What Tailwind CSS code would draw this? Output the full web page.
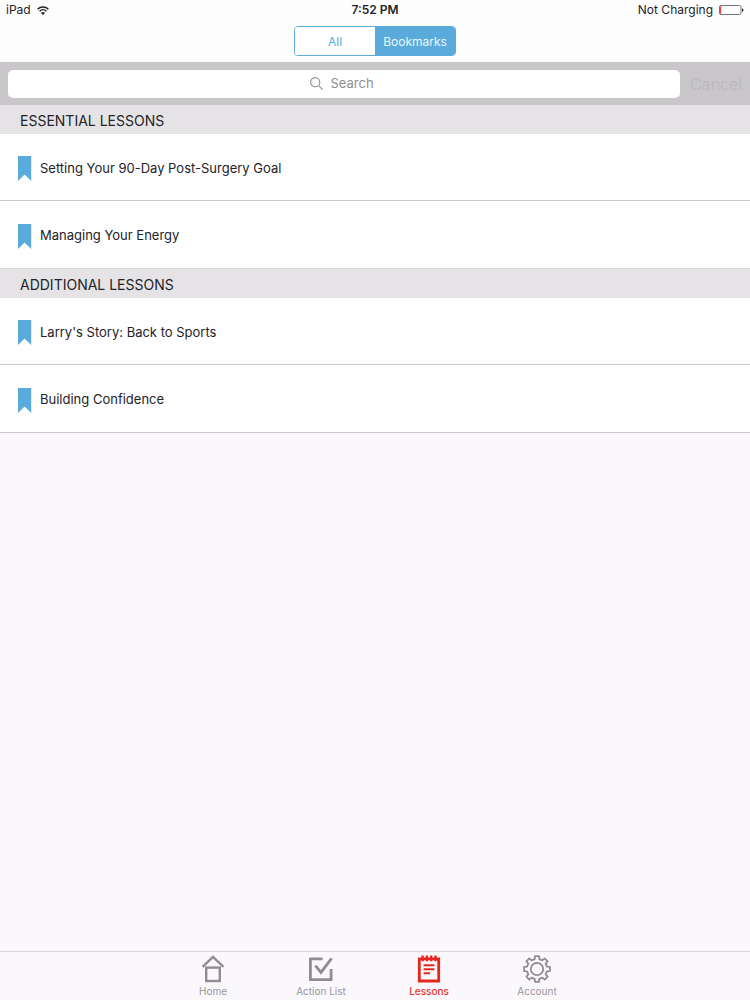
<!DOCTYPE html>
<html lang="en">
<head>
  <meta charset="UTF-8" />
  <meta name="viewport" content="width=device-width, initial-scale=1.0" />
  <title>Lessons</title>
  <script src="https://cdn.jsdelivr.net/npm/@tailwindcss/browser@4"></script>
</head>
<body class="min-h-screen flex flex-col bg-[#faf8fb] font-['Inter','Liberation_Sans',sans-serif] text-[#242328]">

  <header class="bg-[#fefdfe]">
    <!-- Status bar -->
    <div class="grid grid-cols-3 items-center h-5 px-1.5 text-xs">
      <div class="flex items-center gap-1.5">
        <span>iPad</span>
        <svg class="w-3 h-[9px]" viewBox="0 0 12 9" fill="none" stroke="#242328" stroke-width="1.5" aria-hidden="true">
          <path d="M0.6 3.2a7.7 7.7 0 0 1 10.8 0" />
          <path d="M2.6 5.2a4.9 4.9 0 0 1 6.8 0" />
          <path d="M6 9L4 6.9a2.9 2.9 0 0 1 4 0z" fill="#242328" stroke="none" />
        </svg>
      </div>
      <div class="text-center font-semibold">7:52 PM</div>
      <div class="flex items-center justify-end gap-1.5 whitespace-nowrap">
        <span>Not Charging</span>
        <svg class="w-[25px] h-[10px]" viewBox="0 0 25 10" aria-hidden="true">
          <rect x="0.5" y="0.5" width="21.5" height="9" rx="1.5" fill="#fff" stroke="#77757a" />
          <path d="M2.2 1H1.5Q1 1 1 2V8Q1 9 1.5 9H2.2z" fill="#e8474d" />
          <path d="M23 3.2q1.5 0.4 1.5 1.8t-1.5 1.8z" fill="#242328" />
        </svg>
      </div>
    </div>

    <!-- All / Bookmarks switch -->
    <div class="flex justify-center pt-1.5 pb-1.5">
      <div class="flex w-[162px] h-[30px] rounded border border-[#5aabdc] overflow-hidden text-xs">
        <button type="button" class="flex-1 pt-px bg-white text-[#5aabdc]">All</button>
        <button type="button" class="flex-1 pt-px bg-[#5aabdc] text-[#eaf6fd]">Bookmarks</button>
      </div>
    </div>
  </header>

  <form class="flex items-center h-[43px] pl-2 pr-2 bg-[#c8c6c9]">
    <div class="flex flex-1 items-center justify-center gap-2 h-7 rounded-[5px] bg-white">
      <svg class="w-[13px] h-[13px]" viewBox="0 0 13 13" fill="none" stroke="#8e8d92" stroke-width="1.1" aria-hidden="true">
        <circle cx="5.2" cy="5.2" r="4.6" />
        <path d="M8.6 8.6L12.6 12.6" />
      </svg>
      <input type="text" aria-label="Search" placeholder="Search" class="w-12 text-[13px] placeholder:text-[#8e8d92] outline-none" />
    </div>
    <button type="button" class="w-[62px] text-right text-base font-light text-[#b9b7bb]">Cancel</button>
  </form>

  <main class="flex-1">
    <section>
      <h2 class="flex items-center h-[29px] pt-0.5 px-5 bg-[#e5e3e6] text-sm">ESSENTIAL LESSONS</h2>
      <ul class="bg-[#fefefe] border-b border-[#dddbde] text-[13px]">
        <li class="h-[67px] border-b border-[#c9c8cb]">
          <a href="#" class="flex items-center gap-2 h-full pt-[3px] px-[18px]">
            <svg class="w-[14px] h-[25px]" viewBox="0 0 14 25" fill="#5aabdc" aria-hidden="true"><path d="M0 0h13.2v25L6.6 18.4 0 25z" /></svg>
            Setting Your 90-Day Post-Surgery Goal
          </a>
        </li>
        <li class="h-[67px]">
          <a href="#" class="flex items-center gap-2 h-full pt-[3px] px-[18px]">
            <svg class="w-[14px] h-[25px]" viewBox="0 0 14 25" fill="#5aabdc" aria-hidden="true"><path d="M0 0h13.2v25L6.6 18.4 0 25z" /></svg>
            Managing Your Energy
          </a>
        </li>
      </ul>
    </section>

    <section>
      <h2 class="flex items-center h-[29px] pt-0.5 px-5 bg-[#e5e3e6] text-sm">ADDITIONAL LESSONS</h2>
      <ul class="bg-[#fefefe] border-b border-[#c9c8cb] text-[13px]">
        <li class="h-[67px] border-b border-[#c9c8cb]">
          <a href="#" class="flex items-center gap-2 h-full pt-[3px] px-[18px]">
            <svg class="w-[14px] h-[25px]" viewBox="0 0 14 25" fill="#5aabdc" aria-hidden="true"><path d="M0 0h13.2v25L6.6 18.4 0 25z" /></svg>
            Larry's Story: Back to Sports
          </a>
        </li>
        <li class="h-[67px]">
          <a href="#" class="flex items-center gap-2 h-full pt-[3px] px-[18px]">
            <svg class="w-[14px] h-[25px]" viewBox="0 0 14 25" fill="#5aabdc" aria-hidden="true"><path d="M0 0h13.2v25L6.6 18.4 0 25z" /></svg>
            Building Confidence
          </a>
        </li>
      </ul>
    </section>
  </main>

  <!-- Tab bar -->
  <nav class="flex justify-center gap-8 h-[49px] pt-0.5 border-t border-[#d9d7da] text-[10px] leading-3 text-[#98969b]">
    <a href="#" class="flex flex-col items-center gap-px w-[76px]">
      <svg class="w-[30px] h-[30px]" viewBox="0 0 30 30" fill="none" stroke="#8f8d92" stroke-width="2.4" aria-hidden="true">
        <path d="M4.6 12.8L15 2.8L25.4 12.8" />
        <rect x="8.2" y="13.6" width="13.6" height="13.4" />
      </svg>
      Home
    </a>
    <a href="#" class="flex flex-col items-center gap-px w-[76px]">
      <svg class="w-[30px] h-[30px]" viewBox="0 0 30 30" fill="none" stroke="#8f8d92" stroke-width="2.8" aria-hidden="true">
        <path d="M16.6 4.9H4.4V25.6H25.1V15" />
        <path d="M9.4 11.6L15 18.4L25.6 4.4" />
      </svg>
      Action List
    </a>
    <a href="#" class="flex flex-col items-center gap-px w-[76px] font-medium text-[#e3342f]" aria-current="page">
      <svg class="w-[30px] h-[30px]" viewBox="0 0 30 30" fill="none" stroke="#e3271f" aria-hidden="true">
        <path d="M5.3 4.8H24.7V27H5.3z" stroke-width="2.8" />
        <path d="M8.6 1.6v5.6M12.9 1.6v5.6M17.2 1.6v5.6M21.5 1.6v5.6" stroke-width="2.4" />
        <path d="M9.6 11.2H20.4M9.6 15.2H20.4M9.6 19.2H16" stroke-width="2" />
      </svg>
      Lessons
    </a>
    <a href="#" class="flex flex-col items-center gap-px w-[76px]">
      <svg class="w-[30px] h-[30px]" viewBox="0 0 30 30" fill="none" stroke="#8f8d92" stroke-width="1.8" stroke-linejoin="round" aria-hidden="true">
        <path id="gear" />
        <circle cx="15" cy="15" r="6.2" />
      </svg>
      Account
    </a>
  </nav>

  <script>
    // Gear outline: eight teeth around the centre of the 30x30 box
    const points = [];
    for (let i = 0; i < 8; i++) {
      for (const [offset, radius] of [[-13, 10.2], [-9, 13.1], [9, 13.1], [13, 10.2]]) {
        const angle = (i * 45 + offset) * Math.PI / 180;
        points.push((15 + radius * Math.sin(angle)).toFixed(2) + ' ' + (15 - radius * Math.cos(angle)).toFixed(2));
      }
    }
    document.getElementById('gear').setAttribute('d', 'M' + points.join('L') + 'z');
  </script>
</body>
</html>
